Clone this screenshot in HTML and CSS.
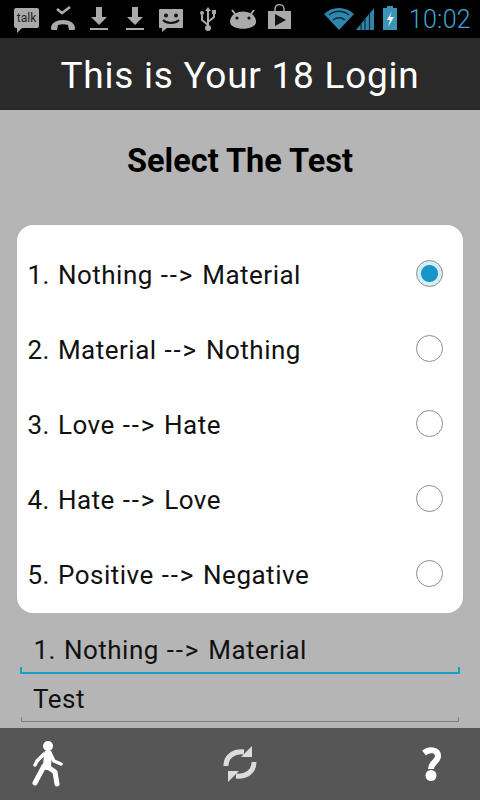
FILE: index.html
```html
<!DOCTYPE html>
<html lang="en">
<head>
<meta charset="utf-8">
<title>This is Your 18 Login</title>
<link rel="stylesheet" href="styles.css">
</head>
<body>
<div class="phone">
  <div class="status">
    <div class="status-left">
      <span class="talk-icon">talk</span>
      <svg width="36" height="38" viewBox="0 0 36 38"><path d="M9 9l5 4 8-6" fill="none" stroke="#aaa" stroke-width="2.600"/><path d="M3 29c-1-12 25-12 24 0l-1 1h-5l-1-5c-3-1-7-1-10 0l-1 5H4z" fill="#aaa"/></svg>
      <svg width="36" height="38" viewBox="0 0 36 38"><path d="M12 7h6v10h5l-8 8-8-8h5z" fill="#aaa"/><rect x="6" y="28" width="18" height="2" fill="#aaa"/></svg>
      <svg width="36" height="38" viewBox="0 0 36 38"><path d="M12 7h6v10h5l-8 8-8-8h5z" fill="#aaa"/><rect x="6" y="28" width="18" height="2" fill="#aaa"/></svg>
      <svg width="36" height="38" viewBox="0 0 36 38"><path d="M4 9h22a1 1 0 0 1 1 1v17a1 1 0 0 1-1 1H11l-5 4v-4H4a1 1 0 0 1-1-1V10a1 1 0 0 1 1-1z" fill="#aaa"/><circle cx="10" cy="15.500" r="2" fill="#111"/><circle cx="20" cy="15.500" r="2" fill="#111"/><path d="M7 20c4 4 12 4 16 0" fill="none" stroke="#111" stroke-width="2"/></svg>
      <svg width="32" height="38" viewBox="0 0 32 38"><path d="M16 10v18M16 25l-6-5v-5M16 22l6-5v-4" fill="none" stroke="#aaa" stroke-width="2"/><circle cx="16" cy="28" r="3" fill="#aaa"/><circle cx="10" cy="13" r="2" fill="#aaa"/><rect x="20" y="10" width="4" height="4" fill="#aaa"/><path d="M16 7l3 4h-6z" fill="#aaa"/></svg>
      <svg width="38" height="38" viewBox="0 0 38 38"><path d="M11 14l-3-4M27 14l3-4" stroke="#aaa" stroke-width="2"/><path d="M6 22c0-14 26-14 26 0 0 9-26 9-26 0z" fill="#aaa"/><circle cx="13" cy="18" r="1.600" fill="#111"/><circle cx="25" cy="18" r="1.600" fill="#111"/></svg>
      <svg width="34" height="38" viewBox="0 0 34 38"><path d="M13 11V9a4.500 4.500 0 0 1 9 0v2" fill="none" stroke="#aaa" stroke-width="1.500"/><path d="M6 11h23v18H6z" fill="#aaa"/><path d="M13 14l11 6-11 6z" fill="#111"/></svg>
    </div>
    <div class="status-right">
      <svg width="32" height="38" viewBox="0 0 32 38"><path d="M16 30L1 14c8-8 22-8 30 0z" fill="#2f86ab"/><path d="M6 15c6-5 14-5 20 0M10 20c4-3 8-3 12 0" fill="none" stroke="#0c2a38" stroke-width="1.400"/></svg>
      <svg width="20" height="38" viewBox="0 0 20 38"><path d="M19 8v22H1z" fill="#2f86ab"/><path d="M6 30V24M10 30V19M14.500 30V13" stroke="#0c2a38" stroke-width="1.200"/></svg>
      <svg class="battery" width="16" height="38" viewBox="0 0 16 38"><path d="M5 6h6v2h4v22H1V8h4z" fill="#3b93b8"/><path d="M10 11l-5 9h3l-2 7 6-10H8z" fill="#e8f4f8"/></svg>
      <span class="clock">10:02</span>
    </div>
  </div>
  <header class="titlebar">This is Your 18 Login</header>
  <main class="content">
    <h1 class="heading">Select The Test</h1>
    <div class="card">
      <div class="row"><span>1. Nothing <span class="arrow">--&gt;</span> Material</span><span class="radio on"></span></div>
      <div class="row"><span>2. Material <span class="arrow">--&gt;</span> Nothing</span><span class="radio"></span></div>
      <div class="row"><span>3. Love <span class="arrow">--&gt;</span> Hate</span><span class="radio"></span></div>
      <div class="row"><span>4. Hate <span class="arrow">--&gt;</span> Love</span><span class="radio"></span></div>
      <div class="row"><span>5. Positive <span class="arrow">--&gt;</span> Negative</span><span class="radio"></span></div>
    </div>
    <div class="field focus"><span class="field-text">1. Nothing <span class="arrow">--&gt;</span> Material</span></div>
    <div class="field plain"><span class="field-text">Test</span></div>
  </main>
  <footer class="bottom">
    <svg class="walk" width="32" height="46" viewBox="0 0 32 46"><circle cx="16" cy="5" r="5" fill="#fff"/><path d="M16 13l-1 12" stroke="#fff" stroke-width="8" stroke-linecap="round"/><path d="M12 25L3 42" fill="none" stroke="#fff" stroke-width="5" stroke-linecap="round"/><path d="M16 26l7 5 2 12" fill="none" stroke="#fff" stroke-width="5" stroke-linecap="round" stroke-linejoin="round"/><path d="M18 12l4 8 7 3" fill="none" stroke="#fff" stroke-width="3.500" stroke-linecap="round" stroke-linejoin="round"/><path d="M12 13l-7 7-2 4" fill="none" stroke="#fff" stroke-width="3.500" stroke-linecap="round" stroke-linejoin="round"/></svg>
    <svg class="sync" width="34" height="38" viewBox="0 0 34 38"><path d="M3 21C3 11 11 6 21 7" fill="none" stroke="#dcdcdc" stroke-width="5"/><path d="M31 17c0 10-8 15-18 14" fill="none" stroke="#dcdcdc" stroke-width="5"/><path d="M29 1v11H18z" fill="#dcdcdc"/><path d="M5 37V26h11z" fill="#dcdcdc"/></svg>
    <svg class="help" width="19" height="34" viewBox="0 0 19 34"><path d="M2 6c5-4 14-4 14 3 0 6-7 6-7 13" fill="none" stroke="#fff" stroke-width="6"/><circle cx="9" cy="28.500" r="5.500" fill="#fff"/></svg>
  </footer>
</div>
</body>
</html>
```
FILE: styles.css
```css
* { box-sizing: border-box; }
html, body { margin: 0; padding: 0; }
body { font-family: Roboto, "Liberation Sans", sans-serif; background: #b5b5b5; }
.phone { width: 480px; height: 800px; display: flex; flex-direction: column; overflow: hidden; }
.status { height: 38px; flex: none; background: #000; display: flex; justify-content: space-between; align-items: flex-start; padding: 0 9px 0 14px; }
.status-left, .status-right { display: flex; align-items: flex-start; }
svg { display: block; }
.talk-icon { position: relative; width: 25px; height: 20px; margin: 8px 9px 0 0; background: #aaa; border-radius: 2px; color: #222; font-size: 12px; line-height: 20px; text-align: center; }
.talk-icon::after { content: ""; position: absolute; left: 3px; top: 100%; border-top: 5px solid #aaa; border-right: 5px solid transparent; }
.battery { margin: 0 11px 0 7px; }
.clock { color: #3fa5cf; font-size: 25px; line-height: 39px; font-weight: 300; letter-spacing: 0.3px; }
.titlebar { height: 72px; flex: none; background: #2a2a2a; color: #fff; font-size: 37px; line-height: 76px; text-align: center; letter-spacing: 0.75px; box-shadow: 0 1px 2px rgba(0,0,0,.4); }
.content { flex: 1; min-height: 0; background: #b5b5b5; padding: 0 17px; }
.heading { margin: 0; padding-top: 33px; height: 115px; font-size: 32.500px; line-height: 36px; font-weight: 700; text-align: center; color: #000; white-space: nowrap; }
.card { height: 388px; background: #fff; border-radius: 16px; padding: 12px 20px 0 10.500px; }
.row { height: 75px; display: flex; align-items: center; justify-content: space-between; font-size: 26px; color: #111; letter-spacing: 0.5px; word-spacing: 1px; }
.arrow { letter-spacing: 1.800px; }
.radio { width: 27px; height: 27px; margin-bottom: 2px; border: 1.500px solid #8c8c8c; border-radius: 50%; background: #fff; }
.radio.on { background: radial-gradient(circle, #1795c9 0 8px, #d5edf7 9px); }
.field { position: relative; font-size: 26px; color: #111; letter-spacing: 0.5px; word-spacing: 1px; }
.field-text { display: block; }
.field.focus { margin: 17px 3px 0; padding-left: 13.500px; height: 44px; line-height: 40px; border-bottom: 2px solid #1b9ccc; }
.field.plain { margin: 5px 4px 0; padding-left: 12px; height: 43px; line-height: 40px; border-bottom: 1px solid #808080; }
.field::before, .field::after { content: ""; position: absolute; bottom: -2px; width: 2px; height: 7px; background: #1b9ccc; }
.field.plain::before, .field.plain::after { bottom: -1px; background: #808080; width: 1px; height: 5px; }
.field::before { left: 0; }
.field::after { right: 0; }
.bottom { height: 72px; flex: none; background: #565656; display: flex; align-items: center; justify-content: space-between; padding: 0 39px 0 32px; }
.sync { margin-right: 6px; }
```
